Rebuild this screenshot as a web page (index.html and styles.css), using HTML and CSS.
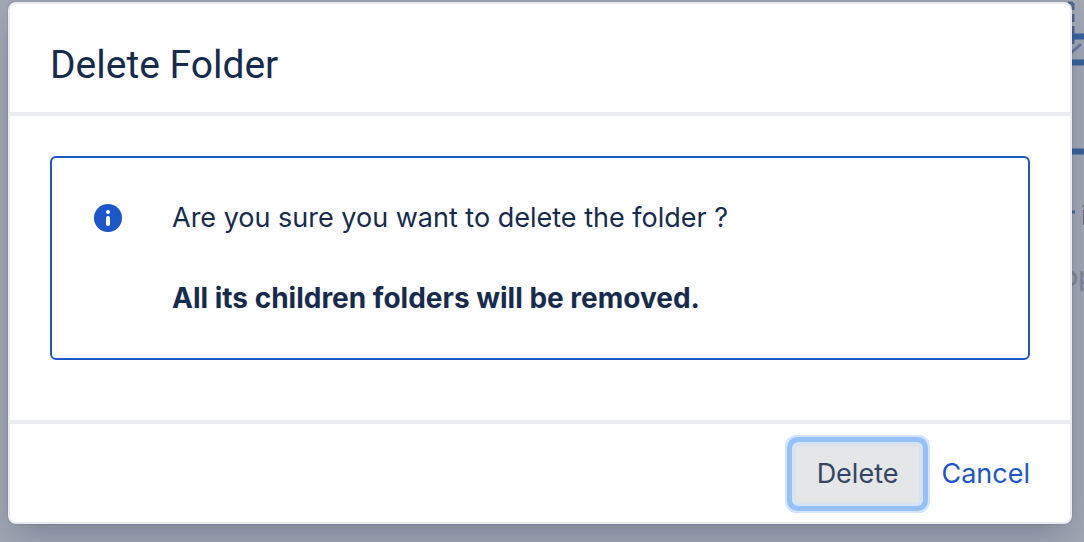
FILE: index.html
```html
<!DOCTYPE html>
<html lang="en">
<head>
    <meta charset="UTF-8">
    <meta name="viewport" content="width=device-width, initial-scale=1.0">
    <title>Delete Folder</title>
    <link rel="stylesheet" href="styles.css">
</head>
<body>
    <!-- Dimmed page behind the dialog -->
    <div class="page-behind" aria-hidden="true">
        <svg class="page-lines" width="24" height="220" viewBox="0 0 24 220">
            <path d="M8 3h5M13 3v7M13 14v8M13 26v8M13 38v6" fill="none" stroke="#4a6796" stroke-width="3"/>
            <path d="M11 53l10-9" fill="none" stroke="#6079a3" stroke-width="3"/>
            <path d="M10 36.5h14M10 62.5h14M10 151.5h14" fill="none" stroke="#37609b" stroke-width="6"/>
            <path d="M11 212h4" stroke="#3c6ba8" stroke-width="3"/>
        </svg>
        <span class="ghost-title">i</span>
        <span class="ghost-text">op</span>
    </div>

    <div class="dialog" role="dialog" aria-labelledby="dialogTitle">
        <div class="dialog-header">
            <h2 id="dialogTitle">Delete Folder</h2>
        </div>

        <div class="dialog-body">
            <div class="message">
                <svg class="message-icon" width="28" height="28" viewBox="0 0 28 28" aria-hidden="true">
                    <circle cx="14" cy="14" r="14" fill="#1d56c8"/>
                    <circle cx="14" cy="8" r="2" fill="#fff"/>
                    <rect x="12" y="12" width="4" height="10" rx="2" fill="#fff"/>
                </svg>
                <div>
                    <p>Are you sure you want to delete the folder ?</p>
                    <p><strong>All its children folders will be removed.</strong></p>
                </div>
            </div>
        </div>

        <div class="dialog-footer">
            <button type="button" class="button">Delete</button>
            <a href="#" class="cancel">Cancel</a>
        </div>
    </div>
</body>
</html>
```
FILE: styles.css
```css
* {
    box-sizing: border-box;
}
body {
    margin: 0;
    padding: 2px 12px 18px 8px;
    min-height: 100vh;
    background-color: #a1a6b3;
    color: #172b4d;
    font-family: Inter, "Liberation Sans", sans-serif;
    font-size: 27px;
    line-height: 40px;
    overflow: hidden;
}
.page-behind {
    position: absolute;
    top: 0;
    right: 0;
    width: 24px;
    height: 100%;
    overflow: hidden;
}
.page-lines {
    display: block;
}
.ghost-title,
.ghost-text {
    position: absolute;
    white-space: nowrap;
}
.ghost-title {
    top: 196px;
    left: 21px;
    color: #5f6580;
}
.ghost-text {
    top: 257px;
    left: 2px;
    color: #80869a;
    font-weight: 500;
}
.dialog {
    position: relative;
    background: #fff;
    border: 2px solid #ebecf0;
    border-radius: 8px;
    box-shadow: 0 16px 32px -8px rgba(9, 30, 66, 0.28), 0 0 2px rgba(9, 30, 66, 0.31);
}
.dialog-header {
    padding: 37px 40px 23px;
    border-bottom: 4px solid #ebecf0;
}
.dialog-header h2 {
    margin: 0;
    font-family: Roboto, "Liberation Sans", sans-serif;
    font-size: 39px;
    line-height: 48px;
    font-weight: 400;
}
.dialog-body {
    padding: 40px 40px 60px;
}
.message {
    display: flex;
    gap: 50px;
    padding: 40px 42px;
    border: 2px solid #1d56c8;
    border-radius: 6px;
}
.message-icon {
    flex: none;
    margin-top: 6px;
}
.message p {
    margin: 0;
}
.message p + p {
    margin-top: 40px;
}
.message strong {
    display: block;
    font-size: 28px;
}
.dialog-footer {
    display: flex;
    justify-content: flex-end;
    align-items: center;
    gap: 20px;
    padding: 20px 40px 18px;
    border-top: 4px solid #ebecf0;
}
.button {
    height: 60px;
    padding: 0 21px;
    background: #e4e6e8;
    border: 2px solid #dde2ea;
    border-radius: 4px;
    color: #344563;
    font: inherit;
    cursor: pointer;
    /* focus ring */
    box-shadow: 0 0 0 2px #d3e4fc, 0 0 0 7px #96c1f8, 0 0 0 9px #d3e4fc;
}
.cancel {
    color: #1d56c8;
    text-decoration: none;
}
```
